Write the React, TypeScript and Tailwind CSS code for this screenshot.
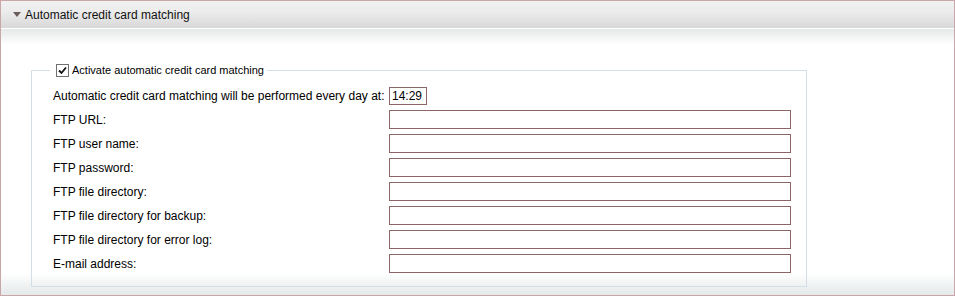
const FIELDS = [
  'FTP URL:',
  'FTP user name:',
  'FTP password:',
  'FTP file directory:',
  'FTP file directory for backup:',
  'FTP file directory for error log:',
  'E-mail address:',
];

export default function App() {
  return (
    <div
      className="w-[955px] h-[296px] flex flex-col border border-[#c9a7a8] bg-white text-black"
      style={{ fontFamily: '"Liberation Sans", Arial, sans-serif' }}
    >
      {/* Panel header */}
      <div className="h-[28px] shrink-0 flex items-center border-b border-white bg-[linear-gradient(to_bottom,#f1f1f1_0%,#ececec_40%,#d8d8d8_100%)]">
        <svg width="8" height="5" viewBox="0 0 8 5" className="ml-[12px]">
          <polygon points="0,0 8,0 4,5" fill="#6b5b5b" />
        </svg>
        <span className="ml-[4px] text-[12px] text-[#111]">Automatic credit card matching</span>
      </div>

      {/* Panel body */}
      <div className="flex-1 bg-[linear-gradient(to_bottom,#e6e9e9_0px,#ffffff_16px,#ffffff_calc(100%-22px),#e4e9e9_100%)]">
        <fieldset className="ml-[30px] mt-[34px] w-[776px] border border-[#d3dee8] pl-[21px] pb-[13px]">
          <legend className="ml-[-3px] pl-[6px] pr-[3px] h-[14px] flex items-center gap-[3px] text-[11px]">
            <span className="w-[13px] h-[13px] border border-[#707070] bg-white flex items-center justify-center">
              <svg width="9" height="9" viewBox="0 0 9 9">
                <path d="M1 4.5 L3.5 7 L8 1.5" fill="none" stroke="#111" strokeWidth="1.8" />
              </svg>
            </span>
            <span>Activate automatic credit card matching</span>
          </legend>

          <div className="mt-[10px] grid grid-cols-[336px_402px] gap-y-[5px] items-center text-[12px]">
            <span>Automatic credit card matching will be performed every day at:</span>
            <div className="w-[38px] h-[18px] border border-[#8c6666] flex items-center pl-[2px]">14:29</div>
            {FIELDS.map((f) => (
              <div key={f} className="contents">
                <span>{f}</span>
                <div className="h-[19px] border border-[#8c6666] bg-white" />
              </div>
            ))}
          </div>
        </fieldset>
      </div>
    </div>
  );
}
